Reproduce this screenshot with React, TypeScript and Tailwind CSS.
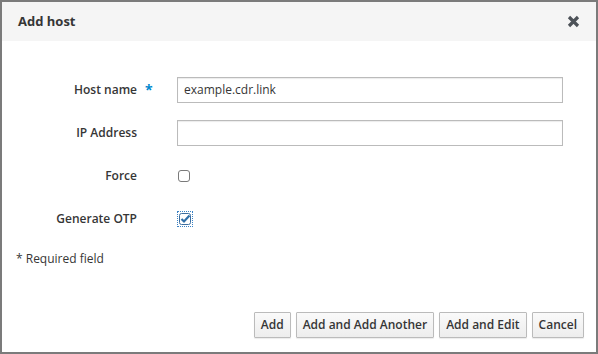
import React from "react";

const font = { fontFamily: '"Open Sans", "Noto Sans", sans-serif' };

function Row({ label, required, children }: { label: string; required?: boolean; children: React.ReactNode }) {
  return (
    <div className="flex items-center h-[43px]">
      <div className="w-[135px] text-right text-[12px] font-semibold text-[#363636]">{label}</div>
      <div className="w-[40px] pl-[8px] text-[#0088ce] text-[14px] font-bold leading-none">{required ? "*" : ""}</div>
      {children}
    </div>
  );
}

function Btn({ children }: { children: React.ReactNode }) {
  return (
    <button className="h-[26px] px-[6px] border border-[#bbb] rounded-[1px] bg-gradient-to-b from-[#fafafa] to-[#ededed] text-[12px] font-semibold text-[#363636] shadow-[0_1px_1px_rgba(3,3,3,0.08)]">
      {children}
    </button>
  );
}

export default function App() {
  return (
    <div style={font} className="w-[598px] h-[354px] border-2 border-[#7b7b7b] bg-white flex flex-col text-[#363636]">
      <div className="h-[39px] bg-[#f5f5f5] flex items-center justify-between pl-[16px] pr-[16px]">
        <div className="text-[13px] font-bold text-[#363636]">Add host</div>
        <svg width="13" height="13" viewBox="0 0 13 13">
          <path d="M2 2 L11 11 M11 2 L2 11" stroke="#4d5258" strokeWidth="3.2" strokeLinecap="butt" />
        </svg>
      </div>
      <div className="flex-1 flex flex-col pt-[27px]">
        <Row label="Host name" required>
          <div className="w-[386px] h-[26px] border border-[#bbb] flex items-center px-[6px] text-[12px] text-[#363636] shadow-[inset_0_1px_1px_rgba(3,3,3,0.08)]">
            example.cdr.link
          </div>
        </Row>
        <Row label="IP Address">
          <div className="w-[386px] h-[26px] border border-[#bbb] shadow-[inset_0_1px_1px_rgba(3,3,3,0.08)]" />
        </Row>
        <Row label="Force">
          <div className="ml-[1px] w-[12px] h-[12px] border border-[#7a7a7a] rounded-[3px] bg-white" />
        </Row>
        <Row label="Generate OTP">
          <div className="ml-[0px] p-[1px] border border-dotted border-[#3b82c4]">
            <svg width="12" height="12" viewBox="0 0 12 12">
              <rect x="0.5" y="0.5" width="11" height="11" rx="2" fill="white" stroke="#3c6e9f" />
              <path d="M2.5 6 L5 8.5 L10.5 2.5" fill="none" stroke="#2f6fa8" strokeWidth="2.2" />
            </svg>
          </div>
        </Row>
        <div className="pl-[14px] pt-[10px] text-[12px] text-[#363636]">* Required field</div>
        <div className="flex-1" />
        <div className="flex justify-end gap-[5px] pr-[12px] pb-[14px]">
          <Btn>Add</Btn>
          <Btn>Add and Add Another</Btn>
          <Btn>Add and Edit</Btn>
          <Btn>Cancel</Btn>
        </div>
      </div>
    </div>
  );
}
